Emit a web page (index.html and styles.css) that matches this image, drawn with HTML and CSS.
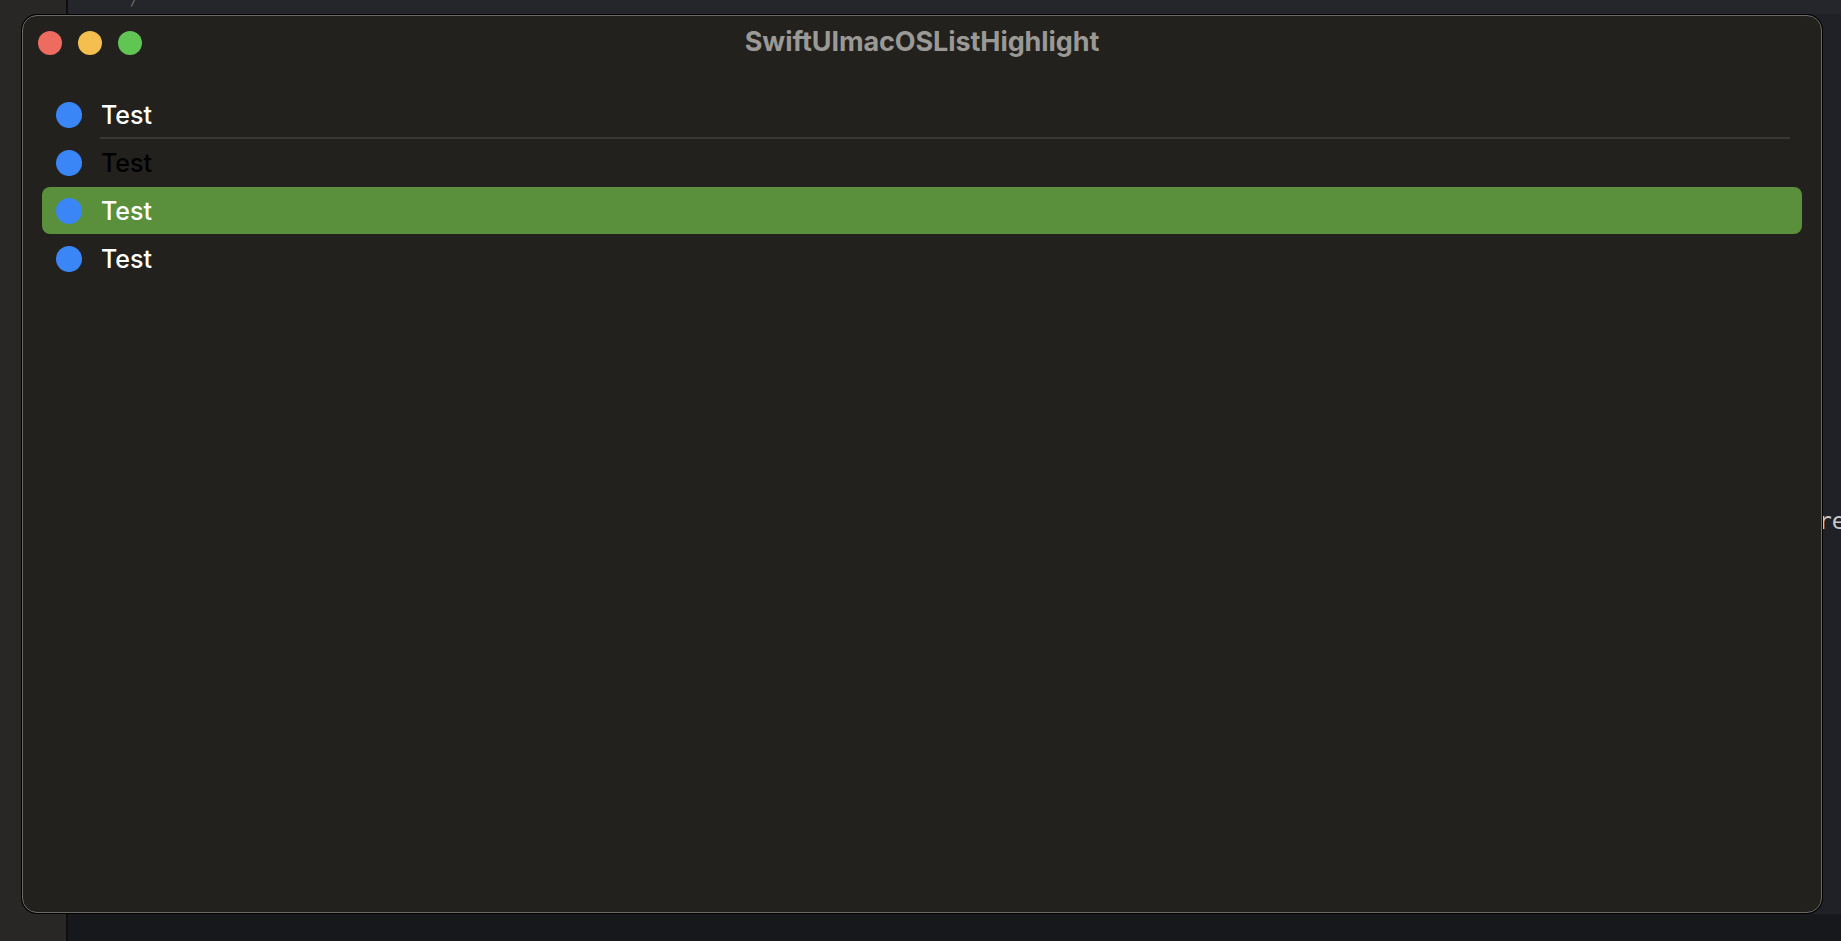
FILE: index.html
```html
<!DOCTYPE html>
<html>
<head>
<meta charset="utf-8">
<link rel="stylesheet" href="styles.css">
</head>
<body>
<div class="desk">
  <div class="side"></div>
  <div class="divider"></div>
  <div class="editor">
    <div class="ed-top"><span class="slash">/</span></div>
    <div class="ed-mid"><span class="code">re</span></div>
    <div class="ed-bottom"></div>
  </div>
</div>

<div class="window">
  <div class="titlebar">
    <div class="lights">
      <span class="light red"></span>
      <span class="light yellow"></span>
      <span class="light green"></span>
    </div>
    <div class="title">SwiftUImacOSListHighlight</div>
  </div>
  <div class="list">
    <div class="row"><span class="dot"></span><span class="label">Test</span><span class="sep"></span></div>
    <div class="row"><span class="dot"></span><span class="label dark">Test</span></div>
    <div class="row selected"><span class="dot"></span><span class="label">Test</span></div>
    <div class="row"><span class="dot"></span><span class="label">Test</span></div>
  </div>
</div>
</body>
</html>
```

FILE: styles.css
```css
html, body {
  margin: 0;
  padding: 0;
  width: 1841px;
  height: 941px;
  overflow: hidden;
  background: #262523;
  font-family: Inter, "Liberation Sans", sans-serif;
}

.desk {
  display: flex;
  width: 1841px;
  height: 941px;
}

.side {
  width: 66px;
  background: #282725;
}

.divider {
  width: 2px;
  background: #0e0e0f;
}

.editor {
  flex: 1;
  display: flex;
  flex-direction: column;
}

.ed-top {
  height: 14px;
  background: #25262b;
  position: relative;
}

.slash {
  position: absolute;
  left: 62px;
  top: -6px;
  font-family: "DejaVu Sans Mono", monospace;
  font-size: 13px;
  line-height: 13px;
  color: #6f7075;
}

.ed-mid {
  height: 900px;
  background: #202126;
  position: relative;
}

.code {
  position: absolute;
  left: 1750px;
  top: 494px;
  font-family: "DejaVu Sans Mono", monospace;
  font-size: 23px;
  color: #c9c9cb;
}

.ed-bottom {
  flex: 1;
  background: #17181b;
}

.window {
  position: absolute;
  left: 22px;
  top: 15px;
  width: 1798px;
  height: 896px;
  background: #22211e;
  border: 1px solid #6b6a66;
  border-radius: 15px;
  box-shadow: 0 0 0 1px #000;
}

.titlebar {
  height: 56px;
  position: relative;
  display: flex;
  align-items: center;
  justify-content: center;
}

.lights {
  position: absolute;
  left: 15px;
  top: 15px;
  display: flex;
  gap: 16px;
}

.light {
  width: 24px;
  height: 24px;
  border-radius: 50%;
}

.red { background: #ee6b60; }
.yellow { background: #f5bf4f; }
.green { background: #61c554; }

.title {
  font-size: 27px;
  font-weight: 700;
  color: #9a9995;
  margin-top: -5px;
  letter-spacing: -0.1px;
}

.list {
  padding: 19px 19px 0 19px;
  display: flex;
  flex-direction: column;
}

.row {
  position: relative;
  height: 48px;
  display: flex;
  align-items: center;
  padding-left: 14px;
  border-radius: 8px;
}

.row.selected {
  background: #5a8f3c;
  height: 47px;
  margin-bottom: 1px;
}

.dot {
  width: 26px;
  height: 26px;
  border-radius: 50%;
  background: #3a86f6;
  flex-shrink: 0;
}

.label {
  margin-left: 19px;
  font-size: 25px;
  font-weight: 500;
  color: #ffffff;
}

.label.dark {
  color: #000000;
}

.sep {
  position: absolute;
  left: 58px;
  right: 12px;
  bottom: 0;
  height: 2px;
  background: #393835;
}
```
